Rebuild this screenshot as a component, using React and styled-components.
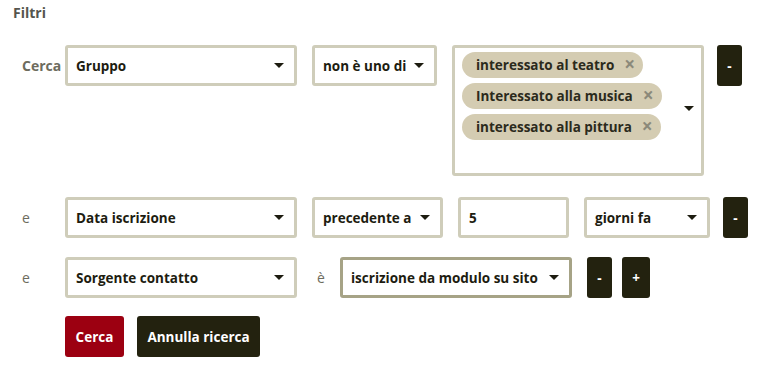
import React from 'react'
import styled, { createGlobalStyle } from 'styled-components'

const GlobalStyle = createGlobalStyle`
  body {
    margin: 0;
    background: #ffffff;
    font-family: "Open Sans", "Liberation Sans", sans-serif;
  }
`

const Page = styled.div`
  padding: 3px 13px 0 13px;
  width: 780px;
  height: 385px;
  box-sizing: border-box;
`

const Title = styled.h3`
  margin: 0 0 22px 0;
  font-size: 14px;
  line-height: 20px;
  font-weight: 700;
  color: #55554d;
`

const Row = styled.div`
  display: flex;
  align-items: flex-start;
  gap: 15px;
  margin-bottom: ${({ $space }) => $space || 0}px;
`

const Label = styled.div`
  width: ${({ $width }) => $width}px;
  padding-left: ${({ $pad }) => $pad}px;
  box-sizing: border-box;
  flex: none;
  line-height: 41px;
  font-size: 14px;
  font-weight: ${({ $bold }) => ($bold ? 700 : 400)};
  color: #6d6c5e;
`

const Box = styled.div`
  flex: none;
  width: ${({ $width }) => $width}px;
  height: 41px;
  box-sizing: border-box;
  border: 3px solid ${({ $focus }) => ($focus ? '#a6a386' : '#cfcdba')};
  border-radius: 3px;
  background: #fff;
  display: flex;
  align-items: center;
  padding: 0 10px 0 8px;
  font-size: 13.5px;
  font-weight: 700;
  color: #1d1c10;
  white-space: nowrap;
`

const Value = styled.span`
  flex: 1;
`

const Caret = styled.span`
  flex: none;
  width: 0;
  height: 0;
  border-left: 5px solid transparent;
  border-right: 5px solid transparent;
  border-top: 5px solid #1d1c10;
  margin-left: 8px;
`

const Multi = styled(Box)`
  height: 131px;
  align-items: flex-start;
  padding: 4px 7px 0 7px;
`

const Chips = styled.div`
  flex: 1;
  display: flex;
  flex-direction: column;
  align-items: flex-start;
  gap: 5px;
`

const Chip = styled.span`
  display: inline-flex;
  align-items: center;
  height: 26px;
  padding: 0 8px 0 14px;
  border-radius: 13px;
  background: #d4ccb2;
  font-size: 13.5px;
  font-weight: 700;
  color: #2b2a1c;
`

const ChipX = styled.span`
  margin-left: 10px;
  font-size: 19px;
  font-weight: 700;
  color: #8b897a;
  line-height: 1;
  margin-top: -1px;
`

const MultiCaret = styled(Caret)`
  align-self: center;
  margin-top: -8px;
`

const Button = styled.button`
  flex: none;
  height: 41px;
  min-width: ${({ $width }) => $width || 0}px;
  padding: 0 ${({ $pad }) => ($pad != null ? $pad : 10)}px;
  border: none;
  border-radius: 3px;
  background: ${({ $red }) => ($red ? '#9c0011' : '#23220f')};
  color: #ffffff;
  font-family: inherit;
  font-size: 13.5px;
  font-weight: 700;
  margin-left: ${({ $shift }) => $shift || 0}px;
  cursor: pointer;
`

const Select = ({ width, focus, children }) => (
  <Box $width={width} $focus={focus}>
    <Value>{children}</Value>
    <Caret />
  </Box>
)

const chips = ['interessato al teatro', 'Interessato alla musica', 'interessato alla pittura']

export default function App() {
  return (
    <Page>
      <GlobalStyle />
      <Title>Filtri</Title>

      <Row $space={21}>
        <Label $width={37} $pad={9} $bold>Cerca</Label>
        <Select width={232}>Gruppo</Select>
        <Select width={125}>non è uno di</Select>
        <Multi $width={252}>
          <Chips>
            {chips.map(c => (
              <Chip key={c}>
                {c}
                <ChipX>×</ChipX>
              </Chip>
            ))}
          </Chips>
          <MultiCaret />
        </Multi>
        <Button $width={25} $pad={0} $shift={-2}>-</Button>
      </Row>

      <Row $space={19}>
        <Label $width={37} $pad={9}>e</Label>
        <Select width={232}>Data iscrizione</Select>
        <Select width={131}>precedente a</Select>
        <Box $width={111}>5</Box>
        <Select width={126}>giorni fa</Select>
        <Button $width={25} $pad={0} $shift={-2}>-</Button>
      </Row>

      <Row $space={18}>
        <Label $width={37} $pad={9}>e</Label>
        <Select width={232}>Sorgente contatto</Select>
        <Label $width={13} $pad={5}>è</Label>
        <Select width={232} focus>iscrizione da modulo su sito</Select>
        <Button $width={25} $pad={0}>-</Button>
        <Button $width={28} $pad={0} $shift={-5}>+</Button>
      </Row>

      <Row>
        <Label $width={37} $pad={9} />
        <Button $red $width={59}>Cerca</Button>
        <Button $width={123} $shift={-2}>Annulla ricerca</Button>
      </Row>
    </Page>
  )
}
